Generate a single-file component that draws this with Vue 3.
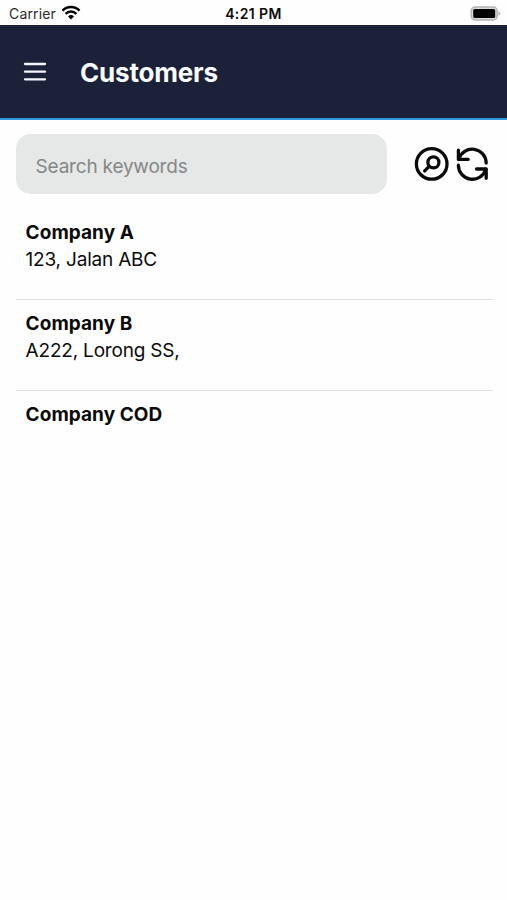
<template>
  <div class="screen">
    <div class="status-bar">
      <div class="carrier">
        <span class="carrier-name">Carrier</span>
        <svg class="wifi" width="20" height="15" viewBox="0 0 20 15">
          <path d="M1.5 5.6a12 12 0 0 1 17 0" />
          <path d="M4.6 8.8a7.6 7.6 0 0 1 10.8 0" />
          <path class="dot" d="M10 14.4l-3-3a4.3 4.3 0 0 1 6 0z" />
        </svg>
      </div>
      <span class="time">4:21 PM</span>
      <svg class="battery" width="31" height="15" viewBox="0 0 31 15">
        <rect class="shell" x="1.2" y="1" width="26" height="13" rx="4" />
        <rect x="3.2" y="3" width="22" height="9" rx="1.5" />
        <path class="tip" d="M28.5 5l2.2 2.5-2.2 2.5z" />
      </svg>
    </div>

    <header class="header">
      <button class="menu" type="button" aria-label="Menu">
        <svg width="24" height="20" viewBox="0 0 24 20">
          <path d="M2 2h20M2 9.7h20M2 17.3h20" />
        </svg>
      </button>
      <h1>Customers</h1>
    </header>

    <form class="search" @submit.prevent>
      <input v-model="keywords" type="text" placeholder="Search keywords" />
      <button class="icon" type="submit" aria-label="Search">
        <svg width="36" height="36" viewBox="0 0 36 36">
          <circle cx="17.7" cy="17.9" r="15.3" />
          <circle cx="19.4" cy="16.4" r="5.5" />
          <path d="M15.4 20.2l-4.7 4.7" />
        </svg>
      </button>
      <button class="icon" type="button" aria-label="Refresh" @click="keywords = ''">
        <svg width="36" height="36" viewBox="0 0 36 36">
          <path d="M4.4 4.2v9.2h9.7" />
          <path d="M4.8 13.1A14 14 0 0 1 32.2 17" />
          <path d="M32.2 32.3V23h-9.7" />
          <path d="M31.8 23.3A14 14 0 0 1 4.4 19.2" />
        </svg>
      </button>
    </form>

    <ul class="customers">
      <li v-for="customer in customers" :key="customer.name">
        <strong>{{ customer.name }}</strong>
        <span>{{ customer.address }}</span>
      </li>
    </ul>
  </div>
</template>

<script setup>
import { ref } from "vue";

const keywords = ref("");

const customers = [
  { name: "Company A", address: "123, Jalan ABC" },
  { name: "Company B", address: "A222, Lorong SS," },
  { name: "Company COD", address: "" },
];
</script>

<style>
body {
  background: #fefefe;
}
</style>

<style scoped>
.screen {
  min-height: 900px;
  box-sizing: border-box;
  background: #fefefe;
  color: #0b0b0b;
  font-family: Inter, "Liberation Sans", sans-serif;
}

.status-bar {
  display: grid;
  grid-template-columns: 1fr auto 1fr;
  align-items: center;
  height: 25px;
  padding: 2px 6px 0 9px;
  box-sizing: border-box;
  font-size: 14px;
}

.carrier {
  display: flex;
  align-items: center;
  gap: 5px;
  color: #2a2a2a;
}

.carrier-name {
  letter-spacing: 0.15px;
}

.wifi {
  margin-top: -3px;
  fill: none;
  stroke: #000;
  stroke-width: 2.5;
}

.wifi .dot {
  fill: #000;
  stroke: none;
}

.time {
  margin-right: 3px;
  font-size: 14px;
  font-weight: 600;
  letter-spacing: 0.4px;
}

.battery {
  justify-self: end;
  margin-top: -1px;
}

.battery .shell {
  fill: #dcdcdc;
  stroke: #b3b3b3;
  stroke-width: 1.5;
}

.battery .tip {
  fill: #b3b3b3;
}

.header {
  display: flex;
  align-items: center;
  gap: 33px;
  height: 95px;
  padding-left: 23px;
  box-sizing: border-box;
  background: #1b2138;
  border-bottom: 2px solid #3498e0;
}

.header h1 {
  margin: 0;
  padding-top: 2px;
  color: #fafcff;
  font-size: 26px;
  font-weight: 700;
  letter-spacing: -0.2px;
}

.menu,
.icon {
  display: block;
  padding: 0;
  border: none;
  background: none;
  cursor: pointer;
}

svg {
  display: block;
}

.menu svg {
  fill: none;
  stroke: #f4f7ff;
  stroke-width: 2.3;
  stroke-linecap: round;
}

.search {
  display: flex;
  align-items: center;
  padding: 14px 15px 0 15.6px;
}

.search input {
  width: 371.4px;
  height: 60px;
  margin-right: 27px;
  padding: 4px 20px 0;
  box-sizing: border-box;
  border: none;
  border-radius: 15px;
  background: #e6e8e7;
  font: inherit;
  font-size: 19px;
  letter-spacing: -0.2px;
  outline: none;
}

.search input::placeholder {
  color: #858786;
  opacity: 1;
}

.icon svg {
  fill: none;
  stroke: #0a0a0a;
  stroke-width: 3.3;
  stroke-linecap: round;
  stroke-linejoin: round;
}

.icon + .icon {
  margin-left: 4px;
}

.customers {
  margin: 15px 14.5px 0 15.6px;
  padding: 0;
  list-style: none;
}

.customers li {
  display: flex;
  flex-direction: column;
  height: 91px;
  padding: 10px 10px 0;
  box-sizing: border-box;
  font-size: 19px;
  line-height: 27px;
  letter-spacing: -0.2px;
}

.customers li:not(:last-child) {
  border-bottom: 1px solid #dedede;
}

.customers strong {
  font-weight: 700;
  letter-spacing: 0.05px;
}
</style>
